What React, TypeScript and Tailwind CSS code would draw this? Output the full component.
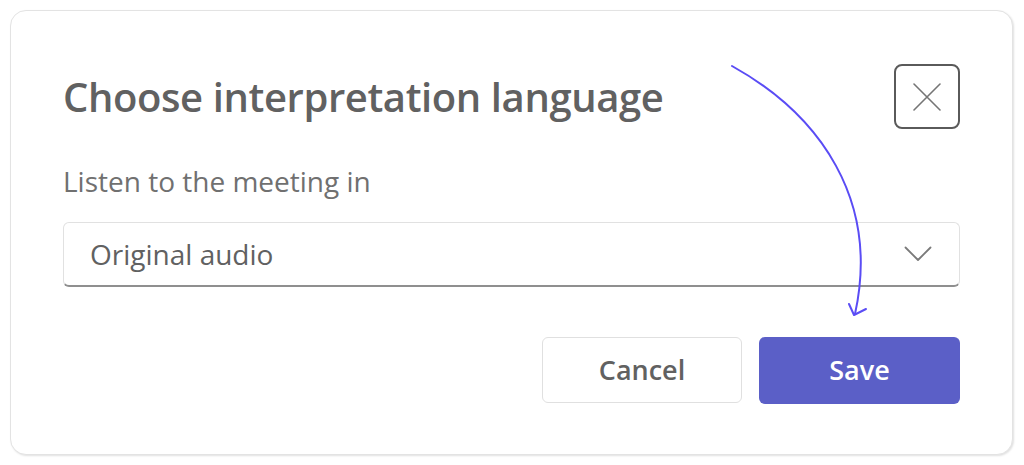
const font = { fontFamily: '"Open Sans", "Noto Sans", sans-serif' };

export default function App() {
  return (
    <div className="relative w-[1024px] h-[465px] bg-white p-[10px]" style={font}>
      {/* Dialog card */}
      <div className="w-[1003px] h-[445px] rounded-[16px] border border-[#e3e3e3] shadow-[1px_1px_2px_rgba(0,0,0,0.12)] bg-white px-[52px] pt-[53px] pb-[50px] flex flex-col">
        <div className="flex items-center justify-between">
          <h1 className="text-[40px] font-semibold text-[#616161] tracking-[-0.4px] leading-none">
            Choose interpretation language
          </h1>
          <button className="w-[66px] h-[65px] rounded-[8px] border-[2.5px] border-[#5a5a5a] flex items-center justify-center">
            <svg width="28" height="28" viewBox="0 0 28 28" fill="none">
              <path d="M1 1L27 27M27 1L1 27" stroke="#757575" strokeWidth="1.6" strokeLinecap="round" />
            </svg>
          </button>
        </div>

        <p className="mt-[33px] text-[28px] text-[#707070] leading-[1.4]">Listen to the meeting in</p>

        <div className="mt-[21px] h-[65px] rounded-[6px] border border-[#e1e1e1] border-b-[2px] border-b-[#8f8f8f] flex items-center justify-between pl-[26px] pr-[27px]">
          <span className="text-[28px] text-[#616161]">Original audio</span>
          <svg width="28" height="16" viewBox="0 0 28 16" fill="none">
            <path d="M1.5 1.5L14 14L26.5 1.5" stroke="#7a7a7a" strokeWidth="1.8" strokeLinecap="round" strokeLinejoin="round" />
          </svg>
        </div>

        <div className="mt-auto flex justify-end gap-[17px]">
          <button className="w-[200px] h-[66px] rounded-[6px] border border-[#e0e0e0] bg-white text-[27px] font-semibold text-[#616161]">
            Cancel
          </button>
          <button className="w-[201px] h-[67px] rounded-[6px] bg-[#5b5fc7] text-[27px] font-semibold text-white">
            Save
          </button>
        </div>
      </div>

      {/* Hand-drawn annotation arrow */}
      <svg className="absolute left-0 top-0 pointer-events-none" width="1024" height="465" viewBox="0 0 1024 465" fill="none">
        <path d="M732 66 C 820 115, 880 200, 855 314" stroke="#5a4cf5" strokeWidth="2" strokeLinecap="round" />
        <path d="M849 304 L854 315 L866 309" stroke="#5a4cf5" strokeWidth="2" strokeLinecap="round" strokeLinejoin="round" />
      </svg>
    </div>
  );
}
